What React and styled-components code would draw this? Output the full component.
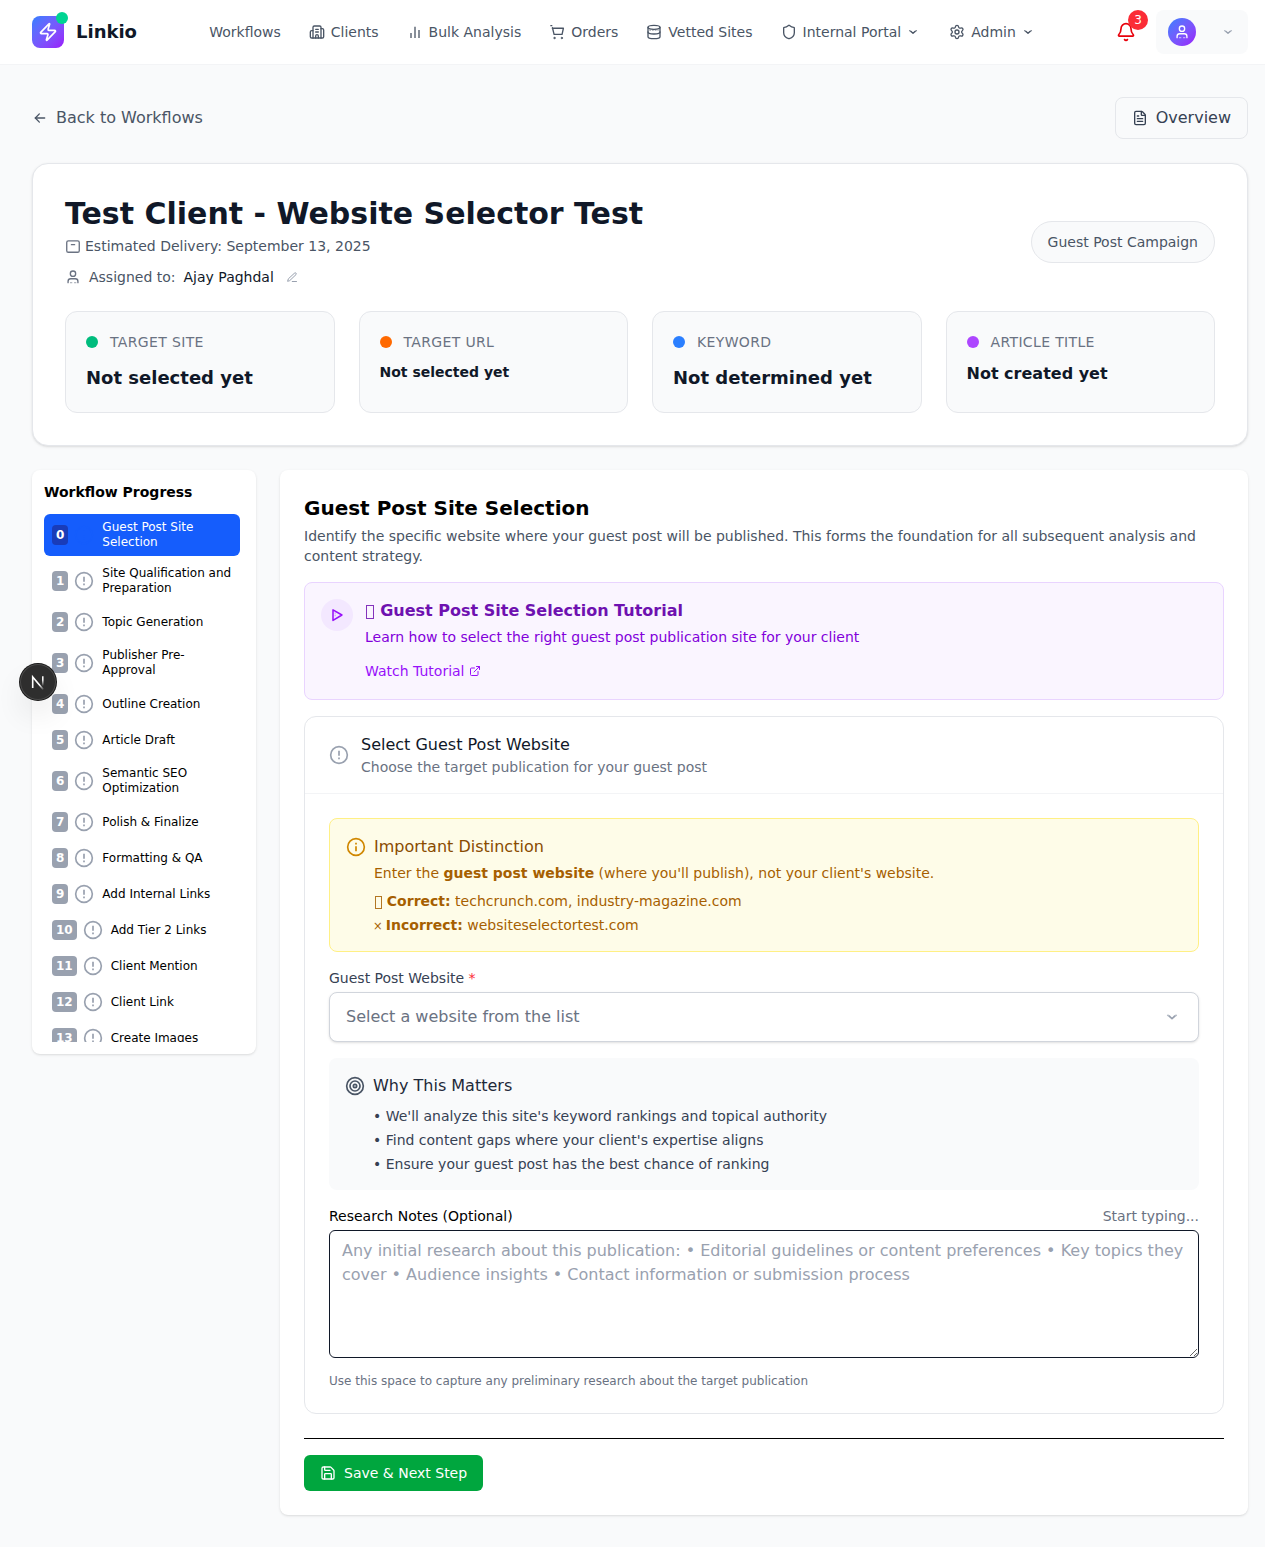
import React from 'react';
import styled, { createGlobalStyle, css } from 'styled-components';
import { Zap, Building2, Shield, Settings, Bell, FileText, ExternalLink, Target, Save } from 'lucide-react';

const Global = createGlobalStyle`
  *, *::before, *::after { box-sizing: border-box; }
  html { overflow: hidden; }
  body {
    margin: 0;
    background: #f9fafb;
    color: #000;
    font-family: "DejaVu Sans", sans-serif;
    font-size: 16px;
    line-height: 24px;
  }
  h1, h2, h3, h4, p, ul { margin: 0; padding: 0; }
  ul { list-style: none; }
  svg { display: block; flex-shrink: 0; }
`;

const Page = styled.div`
  width: 1280px;
  min-height: 1547px;
  background: #f9fafb;
`;

const Header = styled.header`
  display: flex;
  align-items: center;
  height: 65px;
  padding: 0 32px;
  background: #fff;
  border-bottom: 1px solid #f3f4f6;
`;

const Brand = styled.div`
  display: flex;
  align-items: center;
  gap: 12px;
  width: 177.2px;
  font-size: 18px;
  font-weight: 700;
  color: #101828;
`;

const Logo = styled.div`
  position: relative;
  display: grid;
  place-items: center;
  width: 32px;
  height: 32px;
  border-radius: 8px;
  color: #fff;
  background: linear-gradient(to bottom right in oklab, #2b7fff, #9810fa);
`;

const OnlineDot = styled.span`
  position: absolute;
  top: -4px;
  right: -4px;
  width: 12px;
  height: 12px;
  border-radius: 50%;
  background: #00d492;
`;

const Nav = styled.nav`
  display: flex;
  align-items: center;
  gap: 28px;
  flex: 1;
`;

const NavItem = styled.a`
  display: flex;
  align-items: center;
  gap: 6px;
  font-size: 14px;
  line-height: 20px;
  color: #4a5565;
  white-space: nowrap;
`;

const NavLabel = styled.span`
  margin-right: ${(p) => (p.$menu ? '-2px' : '0')};
`;

const Actions = styled.div`
  display: flex;
  align-items: center;
  gap: 20px;
`;

const BellButton = styled.div`
  position: relative;
  color: #e7000b;
`;

const Count = styled.span`
  position: absolute;
  top: -12px;
  right: -12px;
  width: 20px;
  height: 20px;
  border-radius: 50%;
  background: #fb2c36;
  color: #fff;
  font-size: 12px;
  line-height: 20px;
  text-align: center;
`;

const Account = styled.div`
  display: flex;
  align-items: center;
  justify-content: space-between;
  width: 92px;
  height: 44px;
  padding: 0 12px;
  border-radius: 8px;
  background: #f9fafb;
  color: #99a1af;
`;

const Avatar = styled.span`
  display: grid;
  place-items: center;
  width: 28px;
  height: 28px;
  border-radius: 50%;
  color: #fff;
  background: linear-gradient(to bottom right in oklab, #2b7fff, #9810fa);
`;

const Content = styled.main`
  padding: 32px;
`;

const TopRow = styled.div`
  display: flex;
  align-items: center;
  justify-content: space-between;
  margin-bottom: 24px;
`;

const BackLink = styled.a`
  display: flex;
  align-items: center;
  gap: 8px;
  color: #4a5565;
`;

const OverviewButton = styled.a`
  display: flex;
  align-items: center;
  gap: 8px;
  padding: 8px 16px;
  border: 1px solid #e5e7eb;
  border-radius: 8px;
  color: #364153;
`;

const Summary = styled.section`
  padding: 32px;
  margin-bottom: 24px;
  background: #fff;
  border: 1px solid #e5e7eb;
  border-radius: 16px;
  box-shadow: 0 1px 3px rgba(0, 0, 0, 0.1), 0 1px 2px -1px rgba(0, 0, 0, 0.1);
`;

const SummaryHead = styled.div`
  display: flex;
  align-items: center;
  justify-content: space-between;
  height: 91px;
  margin-bottom: 24px;
`;

const ClientName = styled.h1`
  margin-bottom: 4px;
  font-size: 30px;
  line-height: 36px;
  font-weight: 700;
  color: #101828;
`;

const Meta = styled.div`
  display: flex;
  align-items: center;
  gap: ${(p) => p.$gap};
  margin-bottom: ${(p) => p.$after || 0};
  font-size: 14px;
  line-height: 20px;
  color: #4a5565;

  svg { color: #6a7282; }
`;

const Assignee = styled.span`
  color: #101828;
`;

const EditMark = styled.span`
  margin-left: 4px;
  svg { color: #99a1af; }
`;

const CampaignPill = styled.span`
  padding: 10px 16px;
  border: 1px solid #e5e7eb;
  border-radius: 21px;
  background: #f9fafb;
  font-size: 14px;
  line-height: 20px;
  color: #4a5565;
`;

const StatGrid = styled.div`
  display: grid;
  grid-template-columns: repeat(4, 1fr);
  gap: 24px;
`;

const StatCard = styled.div`
  height: 102px;
  padding: 20px;
  background: #f9fafb;
  border: 1px solid #e5e7eb;
  border-radius: 12px;
`;

const StatLabel = styled.div`
  display: flex;
  align-items: center;
  gap: 12px;
  margin-bottom: 12px;
  font-size: 14px;
  line-height: 20px;
  letter-spacing: 0.35px;
  color: #6a7282;
`;

const Dot = styled.span`
  width: 12px;
  height: 12px;
  border-radius: 50%;
  background: ${(p) => p.$color};
`;

const StatValue = styled.p`
  font-size: ${(p) => p.$size}px;
  line-height: ${(p) => p.$leading}px;
  font-weight: 700;
  color: #101828;
`;

const Columns = styled.div`
  display: flex;
  align-items: flex-start;
  gap: 24px;
`;

const panel = css`
  background: #fff;
  border-radius: 8px;
  box-shadow: 0 1px 3px rgba(0, 0, 0, 0.1), 0 1px 2px -1px rgba(0, 0, 0, 0.1);
`;

const Sidebar = styled.aside`
  ${panel}
  width: 224px;
  padding: 12px;
`;

const SidebarTitle = styled.h3`
  margin-bottom: 12px;
  font-size: 14px;
  line-height: 20px;
  font-weight: 700;
`;

const StepList = styled.ul`
  display: flex;
  flex-direction: column;
  gap: 4px;
  height: 528px;
  padding-right: 4px;
  overflow: hidden;
`;

const Step = styled.li`
  display: flex;
  flex-shrink: 0;
  align-items: center;
  gap: 6px;
  padding: 6px 8px;
  border-radius: 6px;
  font-size: 12px;
  line-height: 15px;
  color: ${(p) => (p.$active ? '#fff' : '#000')};
  background: ${(p) => (p.$active ? '#155dfc' : 'transparent')};

  svg { color: ${(p) => (p.$active ? '#155dfc' : '#99a1af')}; }
`;

const StepNumber = styled.span`
  padding: 2px 4px;
  border-radius: 4px;
  line-height: 16px;
  font-weight: 700;
  color: #fff;
  background: ${(p) => (p.$active ? '#193cb8' : '#99a1af')};
`;

const StepName = styled.span`
  flex: 1;
  margin-left: 2px;
`;

const Panel = styled.section`
  ${panel}
  flex: 1;
  padding: 24px;
`;

const PanelTitle = styled.h2`
  margin-bottom: 4px;
  font-size: 20px;
  line-height: 28px;
  font-weight: 700;
`;

const PanelText = styled.p`
  margin-bottom: 16px;
  font-size: 14px;
  line-height: 20px;
  color: #4a5565;
`;

const Tutorial = styled.div`
  display: flex;
  gap: 12px;
  padding: 16px;
  margin-bottom: 16px;
  background: #faf5ff;
  border: 1px solid #e9d4ff;
  border-radius: 8px;
`;

const PlayCircle = styled.span`
  display: grid;
  place-items: center;
  width: 32px;
  height: 32px;
  border-radius: 50%;
  background: #f3e8ff;
  color: #9810fa;
`;

const TutorialTitle = styled.h3`
  margin-bottom: 4px;
  font-size: 16px;
  line-height: 24px;
  font-weight: 700;
  color: #6e11b0;
`;

const TutorialText = styled.p`
  margin-bottom: 12px;
  font-size: 14px;
  line-height: 20px;
  color: #8200db;
`;

const WatchLink = styled.a`
  display: flex;
  align-items: center;
  gap: 4px;
  font-size: 14px;
  line-height: 24px;
  color: #9810fa;
`;

const Card = styled.div`
  margin-bottom: 24px;
  border: 1px solid #e5e7eb;
  border-radius: 12px;
`;

const CardHead = styled.div`
  display: flex;
  align-items: center;
  gap: 12px;
  padding: 16px 24px;
  border-bottom: 1px solid #f3f4f6;
  color: #101828;

  svg { color: #99a1af; }
`;

const CardHint = styled.p`
  font-size: 14px;
  line-height: 20px;
  color: #6a7282;
`;

const CardBody = styled.div`
  padding: 24px;
`;

const Warning = styled.div`
  display: flex;
  gap: 8px;
  padding: 16px;
  margin-bottom: 16px;
  background: #fefce8;
  border: 1px solid #fff085;
  border-radius: 8px;
  font-size: 14px;
  line-height: 20px;
  color: #a65f00;

  svg { margin-top: 2px; color: #d08700; }
`;

const WarningTitle = styled.h4`
  margin-bottom: 4px;
  font-size: 16px;
  line-height: 24px;
  font-weight: 400;
  color: #894b00;
`;

const Examples = styled.div`
  display: flex;
  flex-direction: column;
  gap: 4px;
  margin-top: 8px;
`;

const Cross = styled.span`
  display: inline-block;
  width: 7px;
  margin-right: 0.4px;
  font-size: 11.5px;
  line-height: 16px;
  text-indent: -1px;
`;

const EmptyBox = styled.span`
  display: inline-block;
  width: ${(p) => p.$width}px;
  height: ${(p) => p.$height}px;
  margin-left: 1px;
  margin-right: ${(p) => p.$after}px;
  vertical-align: -3px;
  border: 1px solid currentColor;
  opacity: 0.85;
`;

const FieldLabel = styled.div`
  display: flex;
  justify-content: space-between;
  margin-bottom: 4px;
  font-size: 14px;
  line-height: 20px;
  color: ${(p) => p.$color};
`;

const Required = styled.span`
  color: #fb2c36;
`;

const Muted = styled.span`
  color: #6a7282;
`;

const SelectBox = styled.div`
  display: flex;
  align-items: center;
  justify-content: space-between;
  height: 50px;
  padding: 0 16px;
  margin-bottom: 16px;
  background: #fff;
  border: 1px solid #d1d5dc;
  border-radius: 8px;
  box-shadow: 0 1px 3px rgba(0, 0, 0, 0.1), 0 1px 2px -1px rgba(0, 0, 0, 0.1);
  color: #6a7282;

  svg { color: #99a1af; }
`;

const Reasons = styled.div`
  display: flex;
  gap: 8px;
  padding: 16px;
  margin-bottom: 16px;
  background: #f9fafb;
  border-radius: 8px;
  color: #1e2939;

  svg { margin-top: 2px; color: #4a5565; }
`;

const ReasonList = styled.ul`
  display: flex;
  flex-direction: column;
  gap: 4px;
  margin-top: 8px;
  font-size: 14px;
  line-height: 20px;
  color: #364153;
`;

const Notes = styled.textarea`
  display: block;
  width: 100%;
  height: 128px;
  padding: 8px 12px;
  margin: 0 0 15px;
  border: 1px solid #101828;
  border-radius: 6px;
  background: #fff;
  font: inherit;
  resize: vertical;
  outline: none;

  &::placeholder { color: #99a1af; opacity: 1; }
`;

const Help = styled.p`
  font-size: 12px;
  line-height: 16px;
  color: #6a7282;
`;

const Footer = styled.div`
  display: flex;
  padding-top: 16px;
  border-top: 1px solid #000;
`;

const SaveButton = styled.button`
  display: flex;
  align-items: center;
  gap: 8px;
  height: 36px;
  padding: 0 16px;
  border: 0;
  border-radius: 6px;
  background: #00a63e;
  color: #fff;
  font-family: inherit;
  font-size: 14px;
  line-height: 20px;
`;

const DevBadge = styled.div`
  position: absolute;
  left: 20px;
  top: 664px;
  display: grid;
  place-items: center;
  width: 36px;
  height: 36px;
  border-radius: 50%;
  background: #2e2e2e;
  box-shadow: 0 0 0 1px #171717, inset 0 0 0 1px rgba(255, 255, 255, 0.14),
    0 16px 32px -8px rgba(0, 0, 0, 0.24);
`;

function Icon({ size = 16, children, width = 2 }) {
  return (
    <svg
      width={size} height={size} viewBox="0 0 24 24" fill="none" stroke="currentColor"
      strokeWidth={width} strokeLinecap="round" strokeLinejoin="round"
    >
      {children}
    </svg>
  );
}

const ChevronDown = ({ size }) => (
  <Icon size={size}>
    <path d="M6.9 10L9 11.2" opacity="0.7" />
    <path d="M9 11.2L12 14L15 11.2" />
    <path d="M15 11.2L17.1 10" opacity="0.7" />
  </Icon>
);

const BarsIcon = ({ size }) => (
  <Icon size={size}>
    <g strokeLinecap="butt" strokeWidth="2.8" opacity="0.7">
      <path d="M6 21V13.5" /><path d="M12 21V4" /><path d="M18 21V9" />
    </g>
  </Icon>
);

const CartIcon = ({ size }) => (
  <Icon size={size}>
    <path d="M2.8 2.5h1.4" />
    <path d="M5 6.4h16.6l-2 9.1H7.6L5.2 5.6" />
    <circle cx="8.2" cy="21" r="1.1" fill="currentColor" strokeWidth="1.2" />
    <circle cx="19.2" cy="21" r="1.1" fill="currentColor" strokeWidth="1.2" />
  </Icon>
);

const DatabaseIcon = ({ size }) => (
  <Icon size={size}>
    <ellipse cx="12" cy="5" rx="9" ry="3" />
    <path d="M3 5v14c0 1.7 4 3 9 3s9-1.3 9-3V5" />
    <path d="M3 12c0 1.7 4 3 9 3s9-1.3 9-3" />
    <path d="M5.5 9.3h13" strokeWidth="1.2" strokeDasharray="1.5 2.6" opacity="0.7" />
  </Icon>
);

const UserIcon = ({ size }) => (
  <Icon size={size}>
    <circle cx="12" cy="7" r="4" />
    <path d="M4.6 20.5V18.6a4 4 0 0 1 4-4h6.8a4 4 0 0 1 4 4v1.9" />
    <path d="M7.5 20.6h9.5" strokeWidth="1.3" strokeLinecap="butt" strokeDasharray="3.4 2.7" opacity="0.75" />
  </Icon>
);

const CalendarIcon = ({ size }) => (
  <Icon size={size}>
    <rect x="2.6" y="4.2" width="18.8" height="17.2" rx="2.4" />
    <path d="M9.6 10h4.8" />
  </Icon>
);

const PenIcon = ({ size }) => (
  <Icon size={size}>
    <path d="M12.5 21H21" />
    <path d="M17 4.2a2.1 2.1 0 0 1 3 3L7.4 19.3 3.2 20.6l1.3-4.2z" />
  </Icon>
);

const ArrowLeft = ({ size }) => (
  <Icon size={size}><path d="M11 18.2L5 12l6-6.2" /><path d="M19 12H5" /></Icon>
);

const PlayIcon = ({ size }) => (
  <Icon size={size} width={2.3}>
    <path d="M6 4.2v16L19.4 12z" />
    <path d="M9.3 8.6v7" strokeWidth="1" strokeDasharray="1 2.6" opacity="0.6" />
  </Icon>
);

const AlertIcon = ({ size }) => (
  <Icon size={size}>
    <circle cx="12" cy="12" r="10" />
    <g strokeLinecap="butt" strokeWidth="2.4" opacity="0.85">
      <path d="M12 7v6" /><path d="M12 15v2" />
    </g>
  </Icon>
);

const InfoIcon = ({ size }) => (
  <Icon size={size}>
    <circle cx="12" cy="12" r="10" />
    <g strokeLinecap="butt" strokeWidth="2.4" opacity="0.85">
      <path d="M12 7v2" /><path d="M12 11v6" />
    </g>
  </Icon>
);

const navItems = [
  { label: 'Workflows' },
  { label: 'Clients', icon: Building2 },
  { label: 'Bulk Analysis', icon: BarsIcon },
  { label: 'Orders', icon: CartIcon },
  { label: 'Vetted Sites', icon: DatabaseIcon },
  { label: 'Internal Portal', icon: Shield, menu: true },
  { label: 'Admin', icon: Settings, menu: true },
];

const stats = [
  { label: 'TARGET SITE', value: 'Not selected yet', color: '#00bc7d', size: 18, leading: 28 },
  { label: 'TARGET URL', value: 'Not selected yet', color: '#ff6900', size: 14, leading: 17.5 },
  { label: 'KEYWORD', value: 'Not determined yet', color: '#2b7fff', size: 18, leading: 28 },
  { label: 'ARTICLE TITLE', value: 'Not created yet', color: '#ad46ff', size: 16, leading: 20 },
];

const steps = [
  'Guest Post Site Selection', 'Site Qualification and Preparation', 'Topic Generation',
  'Publisher Pre-Approval', 'Outline Creation', 'Article Draft', 'Semantic SEO Optimization',
  'Polish & Finalize', 'Formatting & QA', 'Add Internal Links', 'Add Tier 2 Links',
  'Client Mention', 'Client Link', 'Create Images',
];

const reasons = [
  "We'll analyze this site's keyword rankings and topical authority",
  "Find content gaps where your client's expertise aligns",
  'Ensure your guest post has the best chance of ranking',
];

function NextMark() {
  return (
    <svg width="36" height="36" viewBox="0 0 36 36" fill="none">
      <defs>
        <linearGradient id="diag" x1="14" y1="14" x2="24" y2="25" gradientUnits="userSpaceOnUse">
          <stop offset="0.6" stopColor="#fff" />
          <stop offset="1" stopColor="#fff" stopOpacity="0.1" />
        </linearGradient>
        <linearGradient id="stem" x1="23" y1="12" x2="23" y2="22" gradientUnits="userSpaceOnUse">
          <stop offset="0.4" stopColor="#fff" />
          <stop offset="1" stopColor="#fff" stopOpacity="0" />
        </linearGradient>
      </defs>
      <path d="M12.7 24V13L23.3 25.6" stroke="url(#diag)" strokeWidth="1.6" />
      <path d="M22.8 12.2V22" stroke="url(#stem)" strokeWidth="1.5" />
    </svg>
  );
}

export default function App() {
  return (
    <Page>
      <Global />
      <Header>
        <Brand>
          <Logo><Zap size={20} /><OnlineDot /></Logo>
          Linkio
        </Brand>
        <Nav>
          {navItems.map(({ label, icon: ItemIcon, menu }) => (
            <NavItem key={label}>
              {ItemIcon && <ItemIcon size={16} />}
              <NavLabel $menu={menu}>{label}</NavLabel>
              {menu && <ChevronDown size={16} />}
            </NavItem>
          ))}
        </Nav>
        <Actions>
          <BellButton><Bell size={20} /><Count>3</Count></BellButton>
          <Account>
            <Avatar><UserIcon size={16} /></Avatar>
            <ChevronDown size={16} />
          </Account>
        </Actions>
      </Header>

      <Content>
        <TopRow>
          <BackLink><ArrowLeft size={16} />Back to Workflows</BackLink>
          <OverviewButton><FileText size={16} />Overview</OverviewButton>
        </TopRow>

        <Summary>
          <SummaryHead>
            <div>
              <ClientName>Test Client - Website Selector Test</ClientName>
              <Meta $gap="4px" $after="11px">
                <CalendarIcon size={16} />Estimated Delivery: September 13, 2025
              </Meta>
              <Meta $gap="8px">
                <UserIcon size={16} />
                <span>Assigned to:</span>
                <Assignee>Ajay Paghdal</Assignee>
                <EditMark><PenIcon size={12} /></EditMark>
              </Meta>
            </div>
            <CampaignPill>Guest Post Campaign</CampaignPill>
          </SummaryHead>
          <StatGrid>
            {stats.map((s) => (
              <StatCard key={s.label}>
                <StatLabel><Dot $color={s.color} />{s.label}</StatLabel>
                <StatValue $size={s.size} $leading={s.leading}>{s.value}</StatValue>
              </StatCard>
            ))}
          </StatGrid>
        </Summary>

        <Columns>
          <Sidebar>
            <SidebarTitle>Workflow Progress</SidebarTitle>
            <StepList>
              {steps.map((name, i) => (
                <Step key={name} $active={i === 0}>
                  <StepNumber $active={i === 0}>{i}</StepNumber>
                  <AlertIcon size={20} />
                  <StepName>{name}</StepName>
                </Step>
              ))}
            </StepList>
          </Sidebar>

          <Panel>
            <PanelTitle>Guest Post Site Selection</PanelTitle>
            <PanelText>
              Identify the specific website where your guest post will be published. This forms the
              foundation for all subsequent analysis and content strategy.
            </PanelText>

            <Tutorial>
              <PlayCircle><PlayIcon size={16} /></PlayCircle>
              <div>
                <TutorialTitle><EmptyBox $width={8} $height={14} $after={0.6} /> Guest Post Site Selection Tutorial</TutorialTitle>
                <TutorialText>Learn how to select the right guest post publication site for your client</TutorialText>
                <WatchLink>Watch Tutorial<ExternalLink size={12} /></WatchLink>
              </div>
            </Tutorial>

            <Card>
              <CardHead>
                <AlertIcon size={20} />
                <div>
                  Select Guest Post Website
                  <CardHint>Choose the target publication for your guest post</CardHint>
                </div>
              </CardHead>
              <CardBody>
                <Warning>
                  <InfoIcon size={20} />
                  <div>
                    <WarningTitle>Important Distinction</WarningTitle>
                    <p>Enter the <strong>guest post website</strong> (where you'll publish), not your client's website.</p>
                    <Examples>
                      <p><EmptyBox $width={7} $height={13} $after={0.4} /> <strong>Correct:</strong> techcrunch.com, industry-magazine.com</p>
                      <p><Cross>×</Cross> <strong>Incorrect:</strong> websiteselectortest.com</p>
                    </Examples>
                  </div>
                </Warning>

                <FieldLabel $color="#364153">
                  <span>Guest Post Website <Required>*</Required></span>
                </FieldLabel>
                <SelectBox>Select a website from the list<ChevronDown size={20} /></SelectBox>

                <Reasons>
                  <Target size={20} />
                  <div>
                    Why This Matters
                    <ReasonList>
                      {reasons.map((r) => <li key={r}>• {r}</li>)}
                    </ReasonList>
                  </div>
                </Reasons>

                <FieldLabel $color="#000">
                  Research Notes (Optional)<Muted>Start typing...</Muted>
                </FieldLabel>
                <Notes placeholder="Any initial research about this publication: • Editorial guidelines or content preferences • Key topics they cover • Audience insights • Contact information or submission process" />
                <Help>Use this space to capture any preliminary research about the target publication</Help>
              </CardBody>
            </Card>

            <Footer>
              <SaveButton><Save size={16} />Save &amp; Next Step</SaveButton>
            </Footer>
          </Panel>
        </Columns>
      </Content>
      <DevBadge><NextMark /></DevBadge>
    </Page>
  );
}
